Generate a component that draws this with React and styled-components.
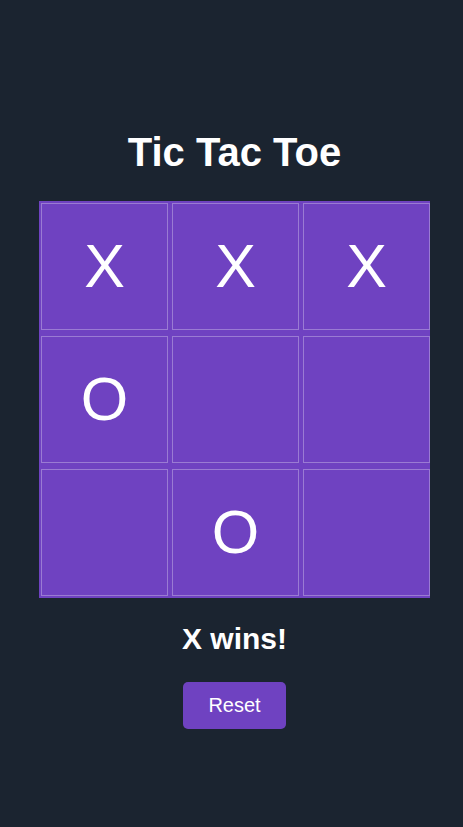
import styled, { createGlobalStyle } from 'styled-components';

const GlobalStyle = createGlobalStyle`
  body {
    margin: 0;
    background: #1b2430;
    font-family: 'Liberation Sans', Arial, sans-serif;
  }
`;

const Page = styled.div`
  display: flex;
  flex-direction: column;
  align-items: center;
  min-height: 827px;
  padding: 129px 0 0 6px;
  box-sizing: border-box;
  color: #fff;
`;

const Title = styled.h1`
  margin: 0 0 26px;
  font-size: 40px;
  line-height: 46px;
  font-weight: 700;
`;

const Board = styled.div`
  display: grid;
  grid-template-columns: repeat(3, 127px);
  grid-auto-rows: 127px;
  gap: 6px 4px;
  padding: 2px 0 2px 2px;
  background: #6f42c1;
`;

const Cell = styled.div`
  display: flex;
  align-items: center;
  justify-content: center;
  box-sizing: border-box;
  border: 1px solid rgba(255, 255, 255, 0.3);
  font-size: 61px;
  font-weight: 400;
  line-height: 1;
  color: #fff;
`;

const Status = styled.h2`
  margin: 24px 0 26px;
  font-size: 30px;
  line-height: 34px;
  font-weight: 700;
`;

const ResetButton = styled.button`
  width: 103px;
  height: 47px;
  border: none;
  border-radius: 5px;
  background: #6f42c1;
  color: #fff;
  font-family: 'Liberation Sans', Arial, sans-serif;
  font-size: 20px;
  cursor: pointer;
`;

const squares = ['X', 'X', 'X', 'O', '', '', '', 'O', ''];

export default function App() {
  return (
    <>
      <GlobalStyle />
      <Page>
        <Title>Tic Tac Toe</Title>
        <Board>
          {squares.map((v, i) => (
            <Cell key={i}>{v}</Cell>
          ))}
        </Board>
        <Status>X wins!</Status>
        <ResetButton>Reset</ResetButton>
      </Page>
    </>
  );
}
